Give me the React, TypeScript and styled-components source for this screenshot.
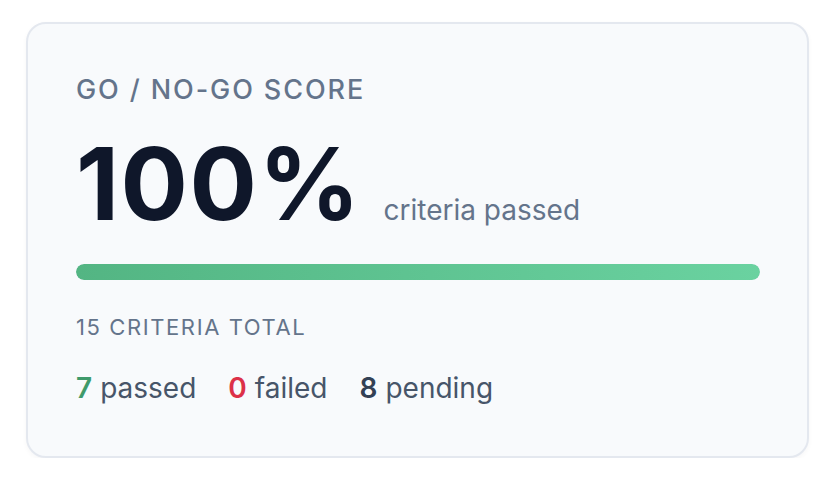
import React from "react";
import styled, { createGlobalStyle } from "styled-components";

const GlobalStyle = createGlobalStyle`
  html, body {
    margin: 0;
    padding: 0;
    background: #ffffff;
    font-family: Inter, "Noto Sans", "Liberation Sans", sans-serif;
  }
`;

const Page = styled.div`
  padding: 22px 0 0 26px;
`;

const Card = styled.section`
  width: 783px;
  box-sizing: border-box;
  padding: 50px 47px 51px 48px;
  background: #f8fafc;
  border: 2px solid #e4e8ef;
  border-radius: 20px;
  box-shadow: 0 2px 5px rgba(15, 23, 42, 0.04);
  display: flex;
  flex-direction: column;
`;

const Heading = styled.div`
  font-size: 27px;
  line-height: 1.2;
  font-weight: 500;
  letter-spacing: 1.9px;
  color: #64748b;
  text-transform: uppercase;
`;

const ScoreRow = styled.div`
  margin-top: 28px;
  display: flex;
  align-items: baseline;
  gap: 22px;
`;

const Score = styled.span`
  font-size: 100px;
  line-height: 1;
  font-weight: 700;
  letter-spacing: 1.5px;
  color: #0f172a;
`;

const ScoreCaption = styled.span`
  font-size: 28px;
  line-height: 1.2;
  color: #64748b;
`;

const Track = styled.div`
  margin-top: 30px;
  height: 16px;
  border-radius: 8px;
  background: #e2e8f0;
  overflow: hidden;
`;

const Fill = styled.div`
  height: 100%;
  border-radius: 8px;
  background: linear-gradient(90deg, #53b583 0%, #6ad2a0 100%);
`;

const Total = styled.div`
  margin-top: 34px;
  font-size: 22px;
  line-height: 1.2;
  letter-spacing: 1.6px;
  color: #64748b;
  text-transform: uppercase;
`;

const Stats = styled.div`
  margin-top: 31px;
  display: flex;
  gap: 32px;
  font-size: 28px;
  line-height: 1.2;
  color: #475569;
`;

const Stat = styled.span``;

const Count = styled.b<{ $tone: string }>`
  font-weight: 600;
  color: ${(p) => p.$tone};
  margin-right: 8px;
`;

const stats = [
  { n: 7, label: "passed", tone: "#3f9a6b" },
  { n: 0, label: "failed", tone: "#dc3148" },
  { n: 8, label: "pending", tone: "#334155" },
];

export default function App() {
  const percent = 100;
  return (
    <Page>
      <GlobalStyle />
      <Card>
        <Heading>Go / No-Go Score</Heading>
        <ScoreRow>
          <Score>{percent}%</Score>
          <ScoreCaption>criteria passed</ScoreCaption>
        </ScoreRow>
        <Track>
          <Fill style={{ width: `${percent}%` }} />
        </Track>
        <Total>15 criteria total</Total>
        <Stats>
          {stats.map((s) => (
            <Stat key={s.label}>
              <Count $tone={s.tone}>{s.n}</Count>
              {s.label}
            </Stat>
          ))}
        </Stats>
      </Card>
    </Page>
  );
}
